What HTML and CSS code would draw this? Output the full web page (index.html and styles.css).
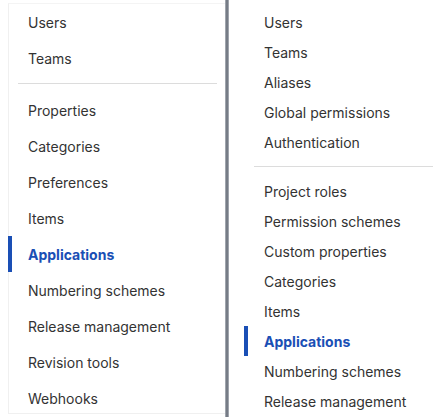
FILE: index.html
```html
<!DOCTYPE html>
<html>
<head>
<meta charset="utf-8">
<link rel="stylesheet" href="styles.css">
</head>
<body>
<div class="page">
  <nav class="panel panel-left">
    <ul class="menu">
      <li class="item">Users</li>
      <li class="item">Teams</li>
    </ul>
    <hr class="divider">
    <ul class="menu">
      <li class="item">Properties</li>
      <li class="item">Categories</li>
      <li class="item">Preferences</li>
      <li class="item">Items</li>
      <li class="item active">Applications</li>
      <li class="item">Numbering schemes</li>
      <li class="item">Release management</li>
      <li class="item">Revision tools</li>
      <li class="item">Webhooks</li>
    </ul>
  </nav>
  <div class="separator"></div>
  <nav class="panel panel-right">
    <ul class="menu">
      <li class="item">Users</li>
      <li class="item">Teams</li>
      <li class="item">Aliases</li>
      <li class="item">Global permissions</li>
      <li class="item">Authentication</li>
    </ul>
    <hr class="divider">
    <ul class="menu">
      <li class="item">Project roles</li>
      <li class="item">Permission schemes</li>
      <li class="item">Custom properties</li>
      <li class="item">Categories</li>
      <li class="item">Items</li>
      <li class="item active">Applications</li>
      <li class="item">Numbering schemes</li>
      <li class="item">Release management</li>
    </ul>
  </nav>
</div>
</body>
</html>
```
FILE: styles.css
```css
* { box-sizing: border-box; }
html, body {
  margin: 0;
  padding: 0;
  background: #ffffff;
  width: 443px;
  height: 417px;
  overflow: hidden;
}
body {
  font-family: Inter, "Noto Sans", sans-serif;
  font-size: 14px;
  color: #333333;
}
.page {
  display: flex;
  align-items: flex-start;
  height: 417px;
}
.panel-left {
  margin: 3px 0 0 8px;
  width: 217px;
  height: 411px;
  border-left: 1px solid #f0f0f0;
  border-top: 1px solid #f4f4f4;
  border-bottom: 1px solid #f0f0f0;
}
.separator {
  width: 4px;
  height: 417px;
  background: #767c86;
  border-left: 1px solid #a0a5ad;
  border-right: 1px solid #a0a5ad;
}
.panel-right {
  margin: 7px 0 0 15px;
  flex: 1;
}
.menu {
  list-style: none;
  margin: 0;
  padding: 0;
}
.item {
  position: relative;
  display: flex;
  align-items: center;
  padding-left: 19px;
  white-space: nowrap;
}
.panel-left .item { height: 36px; }
.panel-right .item { height: 30px; }
.item.active {
  color: #1a4fb5;
  font-weight: 700;
}
.item.active::before {
  content: "";
  position: absolute;
  left: -1px;
  top: 0;
  bottom: 0;
  width: 4px;
  background: #1a4fb5;
}
.panel-right .item.active::before { left: 0; }
.panel-right .item { padding-left: 20px; }
.divider {
  border: 0;
  height: 1px;
  background: #dcdcdc;
}
.panel-left .divider {
  margin: 7px 8px 8px 9px;
}
.panel-right .divider {
  margin: 9px 10px 9px 10px;
}
```
